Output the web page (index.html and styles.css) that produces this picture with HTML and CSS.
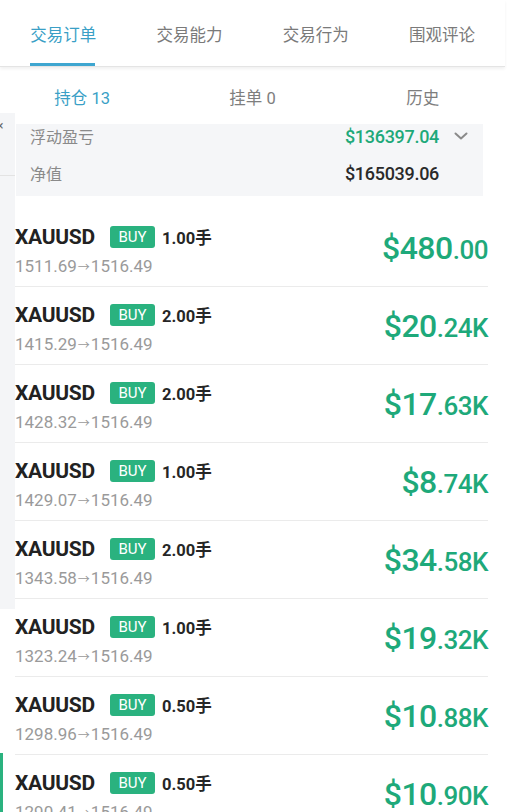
FILE: index.html
```html
<!DOCTYPE html>
<html lang="zh">
<head>
<meta charset="utf-8">
<link rel="stylesheet" href="styles.css">
</head>
<body>
<div class="page">
  <nav class="tabs">
    <div class="tab active">交易订单</div>
    <div class="tab">交易能力</div>
    <div class="tab">交易行为</div>
    <div class="tab">围观评论</div>
  </nav>
  <div class="subtabs">
    <div class="subtab active">持仓 13</div>
    <div class="subtab">挂单 0</div>
    <div class="subtab">历史</div>
  </div>
  <div class="main">
    <aside class="strip">
      <div class="strip-panel">
        <div class="strip-close">×</div>
        <div class="strip-line"></div>
      </div>
      <div class="strip-bar"></div>
    </aside>
    <section class="content">
      <div class="summary">
        <div class="sum-row first">
          <span class="sum-label">浮动盈亏</span>
          <span class="sum-value green">$136397.04</span>
          <svg class="chev" width="14" height="8" viewBox="0 0 14 8"><path d="M1.5 1.5 L7 6.5 L12.5 1.5" fill="none" stroke="#8a8a8a" stroke-width="2" stroke-linecap="round" stroke-linejoin="round"/></svg>
        </div>
        <div class="sum-row">
          <span class="sum-label">净值</span>
          <span class="sum-value">$165039.06</span>
          <span class="chev-space"></span>
        </div>
      </div>
      <ul class="orders">
        <li class="order">
          <div class="info">
            <div class="line1"><span class="sym">XAUUSD</span><span class="badge">BUY</span><span class="lots">1.00手</span></div>
            <div class="line2">1511.69<span class="arrow">→</span>1516.49</div>
          </div>
          <div class="profit"><span class="big">$480</span><span class="small">.00</span></div>
        </li>
        <li class="order">
          <div class="info">
            <div class="line1"><span class="sym">XAUUSD</span><span class="badge">BUY</span><span class="lots">2.00手</span></div>
            <div class="line2">1415.29<span class="arrow">→</span>1516.49</div>
          </div>
          <div class="profit"><span class="big">$20</span><span class="small">.24K</span></div>
        </li>
        <li class="order">
          <div class="info">
            <div class="line1"><span class="sym">XAUUSD</span><span class="badge">BUY</span><span class="lots">2.00手</span></div>
            <div class="line2">1428.32<span class="arrow">→</span>1516.49</div>
          </div>
          <div class="profit"><span class="big">$17</span><span class="small">.63K</span></div>
        </li>
        <li class="order">
          <div class="info">
            <div class="line1"><span class="sym">XAUUSD</span><span class="badge">BUY</span><span class="lots">1.00手</span></div>
            <div class="line2">1429.07<span class="arrow">→</span>1516.49</div>
          </div>
          <div class="profit"><span class="big">$8</span><span class="small">.74K</span></div>
        </li>
        <li class="order">
          <div class="info">
            <div class="line1"><span class="sym">XAUUSD</span><span class="badge">BUY</span><span class="lots">2.00手</span></div>
            <div class="line2">1343.58<span class="arrow">→</span>1516.49</div>
          </div>
          <div class="profit"><span class="big">$34</span><span class="small">.58K</span></div>
        </li>
        <li class="order">
          <div class="info">
            <div class="line1"><span class="sym">XAUUSD</span><span class="badge">BUY</span><span class="lots">1.00手</span></div>
            <div class="line2">1323.24<span class="arrow">→</span>1516.49</div>
          </div>
          <div class="profit"><span class="big">$19</span><span class="small">.32K</span></div>
        </li>
        <li class="order">
          <div class="info">
            <div class="line1"><span class="sym">XAUUSD</span><span class="badge">BUY</span><span class="lots">0.50手</span></div>
            <div class="line2">1298.96<span class="arrow">→</span>1516.49</div>
          </div>
          <div class="profit"><span class="big">$10</span><span class="small">.88K</span></div>
        </li>
        <li class="order">
          <div class="info">
            <div class="line1"><span class="sym">XAUUSD</span><span class="badge">BUY</span><span class="lots">0.50手</span></div>
            <div class="line2">1290.41<span class="arrow">→</span>1516.49</div>
          </div>
          <div class="profit"><span class="big">$10</span><span class="small">.90K</span></div>
        </li>
      </ul>
    </section>
  </div>
</div>
</body>
</html>
```

FILE: styles.css
```css
* { box-sizing: border-box; }
html, body { margin: 0; padding: 0; background: #fff; }
body {
  width: 508px;
  height: 812px;
  overflow: hidden;
  font-family: Roboto, "Noto Sans CJK SC", "Noto Sans", sans-serif;
  color: #222;
}
.page { width: 508px; }

.tabs {
  display: flex;
  width: 505px;
  height: 67px;
  background: #fff;
  border-bottom: 1px solid #e4e4e4;
  box-shadow: 0 2px 3px rgba(0,0,0,0.06);
  position: relative;
  z-index: 1;
}
.tab {
  flex: 1;
  display: flex;
  justify-content: center;
  align-items: center;
  font-size: 16.5px;
  color: #7a7a7a;
  padding-top: 1px;
  position: relative;
}
.tab.active { color: #3a9fc6; }
.tab.active::after {
  content: "";
  position: absolute;
  left: 30px;
  right: 31px;
  bottom: 0;
  height: 3px;
  background: #3ea6d0;
}

.subtabs {
  display: flex;
  height: 46px;
  padding-top: 18px;
}
.subtab {
  flex: 1;
  display: flex;
  justify-content: center;
  align-items: center;
  font-size: 16.5px;
  color: #7e7e7e;
  height: 24px;
}
.subtab:nth-child(1) { margin-left: -3px; }
.subtab.active { color: #3a9fc6; }

.main { display: flex; }
.strip {
  width: 15px;
  flex: none;
  display: flex;
  flex-direction: column;
}
.strip-panel {
  height: 496px;
  background: #f4f5f7;
}
.strip-close {
  font-size: 12px;
  line-height: 14px;
  color: #666;
  margin-left: -3px;
  padding-top: 6px;
}
.strip-line {
  margin-top: 42px;
  height: 1px;
  background: #e3e3e3;
}
.strip-bar {
  margin-top: 144px;
  width: 3px;
  height: 60px;
  background: #2ab27f;
}

.content {
  width: 493px;
  padding-top: 11px;
}
.summary {
  margin-left: 1px;
  width: 467px;
  background: #f5f6f8;
  padding: 0 14px 9px 14px;
  display: flex;
  flex-direction: column;
  gap: 11px;
}
.sum-row {
  display: flex;
  align-items: center;
  height: 28px;
}
.sum-row.first { height: 24px; }
.sum-label {
  font-size: 16px;
  color: #8a8a8a;
  flex: 1;
}
.sum-value {
  font-size: 18px;
  font-weight: 500;
  color: #2a2a2a;
  letter-spacing: -0.3px;
}
.sum-value.green { color: #1ea97a; }
.chev { margin-left: 15px; margin-right: 1px; }
.chev-space { width: 30px; }

.orders {
  list-style: none;
  margin: 13px 0 0 0;
  padding: 0;
  width: 473px;
}
.order {
  display: flex;
  align-items: center;
  justify-content: space-between;
  height: 78px;
  border-bottom: 1px solid #ebebeb;
}
.info {
  align-self: flex-start;
  padding-top: 16px;
}
.line1 {
  display: flex;
  align-items: center;
  height: 24px;
}
.sym {
  font-size: 21px;
  font-weight: 700;
  color: #222;
  width: 95px;
  letter-spacing: -0.3px;
}
.badge {
  background: #2ab27f;
  color: #fff;
  font-size: 15px;
  height: 22px;
  width: 45px;
  display: inline-flex;
  align-items: center;
  justify-content: center;
  border-radius: 3px;
}
.lots {
  margin-left: 7px;
  font-size: 16.5px;
  font-weight: 700;
  color: #262626;
}
.line2 {
  margin-top: 7px;
  height: 20px;
  line-height: 20px;
  font-size: 17px;
  color: #9a9a9a;
}
.arrow { font-size: 12px; margin: 0 1px; }

.profit {
  color: #1ea97a;
  font-weight: 500;
  white-space: nowrap;
  letter-spacing: -0.5px;
}
.profit .big { font-size: 32px; }
.profit .small { font-size: 26px; }
```
